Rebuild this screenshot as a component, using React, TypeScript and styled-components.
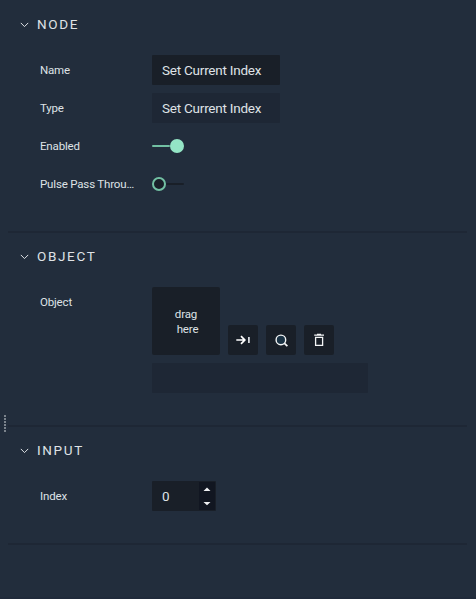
import React from "react";
import styled, { createGlobalStyle } from "styled-components";

const GlobalStyle = createGlobalStyle`
  * { box-sizing: border-box; }
  body {
    margin: 0;
    background: #222d3c;
    color: #dfe2e6;
    font-family: Roboto, sans-serif;
    font-size: 11px;
  }
`;

const Panel = styled.main`
  position: relative;
  height: 599px;
  padding: 1px 8px 0;
  overflow: hidden;
  background: #222d3c;
  border-bottom: 2px solid #202a3a;
`;

const Section = styled.section`
  width: 459px;
  padding-bottom: 32px;
  border-bottom: 2px solid #1e2735;
`;

const Header = styled.header`
  display: flex;
  align-items: center;
  height: 47px;
  margin-bottom: 7px;
  padding-left: 12px;
  gap: 8px;
`;

const Title = styled.h2`
  margin: 0;
  padding-bottom: 2px;
  font-size: 13.5px;
  font-weight: 400;
  line-height: 16px;
  letter-spacing: 1.65px;
`;

const Rows = styled.div`
  display: flex;
  flex-direction: column;
  gap: 8px;
  padding-left: 32px;
`;

const Row = styled.div`
  display: grid;
  grid-template-columns: 112px 1fr;
  align-items: start;
  min-height: 30px;
`;

const Label = styled.span`
  height: 30px;
  font-size: 11.5px;
  line-height: 30px;
  letter-spacing: -0.17px;
  white-space: nowrap;
`;

const Field = styled.div<{ $width: number; $readOnly?: boolean }>`
  width: ${(p) => p.$width}px;
  height: 30px;
  padding-left: 10px;
  background: ${(p) => (p.$readOnly ? "#1e2735" : "#191f28")};
  border-radius: 1px;
  font-size: 13.5px;
  line-height: 31px;
  letter-spacing: -0.23px;
`;

const Switch = styled.div<{ $on?: boolean }>`
  display: flex;
  align-items: center;
  flex-direction: ${(p) => (p.$on ? "row" : "row-reverse")};
  width: 32px;
  height: 30px;
`;

const Track = styled.span<{ $on?: boolean }>`
  flex: 1;
  height: 2px;
  border-radius: 1px;
  background: ${(p) => (p.$on ? "#72c0a3" : "#191f28")};
`;

const Thumb = styled.span<{ $on?: boolean }>`
  width: 14px;
  height: 14px;
  border: 2px solid ${(p) => (p.$on ? "#94e5c6" : "#72c0a3")};
  border-radius: 50%;
  background: ${(p) => (p.$on ? "#94e5c6" : "#191f28")};
`;

const ObjectEditor = styled.div`
  display: flex;
  flex-direction: column;
  gap: 8px;
`;

const Tools = styled.div`
  display: flex;
  align-items: flex-end;
  gap: 8px;
`;

const DropZone = styled.div`
  display: flex;
  flex-direction: column;
  align-items: center;
  justify-content: center;
  width: 68px;
  height: 68px;
  padding-top: 1px;
  border-radius: 2px;
  background: #191f28;
  font-size: 11.5px;
  line-height: 15px;
  letter-spacing: -0.15px;
`;

const DropLine = styled.span<{ $indent?: number }>`
  padding-left: ${(p) => p.$indent ?? 0}px;
`;

const IconButton = styled.button`
  display: grid;
  place-items: center;
  width: 30px;
  height: 30px;
  padding: 0;
  border: 0;
  border-radius: 2px;
  background: #191f28;
`;

const NumberField = styled.div`
  display: flex;
  justify-content: space-between;
  width: 64px;
  height: 30px;
  padding: 1px 1px 1px 10px;
  border-radius: 1px;
  background: #191f28;
  font-size: 13.5px;
  line-height: 29px;
`;

const Stepper = styled.div`
  display: grid;
  place-items: center;
  width: 16px;
  height: 28px;
  background: #111621;
`;

const Grip = styled.div`
  position: absolute;
  left: 4px;
  top: 415px;
  display: grid;
  gap: 1px;
`;

const GripDot = styled.i`
  width: 2px;
  height: 2px;
  background: #7b838c;
`;

const Chevron = () => (
  <svg width="9" height="6" viewBox="0 0 9 6" fill="none" stroke="#dfe2e6">
    <path d="M.8 .9 4.5 4.6 8.2 .9" />
  </svg>
);

function Group({ title, children }: { title: string; children: React.ReactNode }) {
  return (
    <Section>
      <Header>
        <Chevron />
        <Title>{title}</Title>
      </Header>
      <Rows>{children}</Rows>
    </Section>
  );
}

function Property({ label, children }: { label: string; children: React.ReactNode }) {
  return (
    <Row>
      <Label>{label}</Label>
      {children}
    </Row>
  );
}

const Toggle = ({ on }: { on?: boolean }) => (
  <Switch $on={on} role="switch" aria-checked={!!on}>
    <Track $on={on} />
    <Thumb $on={on} />
  </Switch>
);

const AssignIcon = () => (
  <svg width="30" height="30" fill="none" stroke="#fff" strokeWidth="1.7">
    <path d="M8.3 15h8.5M13 11.2l3.8 3.8-3.8 3.8" />
    <path d="M20.9 12v6" stroke="#dfe2e6" strokeWidth="1.7" />
  </svg>
);

const SearchIcon = () => (
  <svg width="30" height="30" fill="none" stroke="#f4f5f6">
    <circle cx="14.9" cy="14.9" r="4.8" fill="#1b3345" strokeWidth="1.4" />
    <path d="m18.2 18.2 3.2 3" strokeWidth="1.8" />
  </svg>
);

const TrashIcon = () => (
  <svg width="30" height="30" fill="none" stroke="#f4f5f6" strokeWidth="1.3">
    <path d="M10.2 10.2h9.8M13 9.4h4M11.6 12.4h7v8h-7z" />
  </svg>
);

export default function App() {
  return (
    <>
      <GlobalStyle />
      <Panel>
        <Group title="NODE">
          <Property label="Name">
            <Field $width={128}>Set Current Index</Field>
          </Property>
          <Property label="Type">
            <Field $width={128} $readOnly>Set Current Index</Field>
          </Property>
          <Property label="Enabled">
            <Toggle on />
          </Property>
          <Property label="Pulse Pass Throu…">
            <Toggle />
          </Property>
        </Group>
        <Group title="OBJECT">
          <Property label="Object">
            <ObjectEditor>
              <Tools>
                <DropZone>
                  <DropLine>drag</DropLine>
                  <DropLine $indent={3}>here</DropLine>
                </DropZone>
                <IconButton aria-label="Assign"><AssignIcon /></IconButton>
                <IconButton aria-label="Find"><SearchIcon /></IconButton>
                <IconButton aria-label="Delete"><TrashIcon /></IconButton>
              </Tools>
              <Field $width={216} $readOnly />
            </ObjectEditor>
          </Property>
        </Group>
        <Group title="INPUT">
          <Property label="Index">
            <NumberField>
              0
              <Stepper>
                <svg width="16" height="28" fill="#eef0f2">
                  <path d="M4.5 9 8 5.5 11.5 9zM4.5 20h7L8 23.2z" />
                </svg>
              </Stepper>
            </NumberField>
          </Property>
        </Group>
        <Grip>
          {[0, 1, 2, 3, 4, 5].map((dot) => <GripDot key={dot} />)}
        </Grip>
      </Panel>
    </>
  );
}
